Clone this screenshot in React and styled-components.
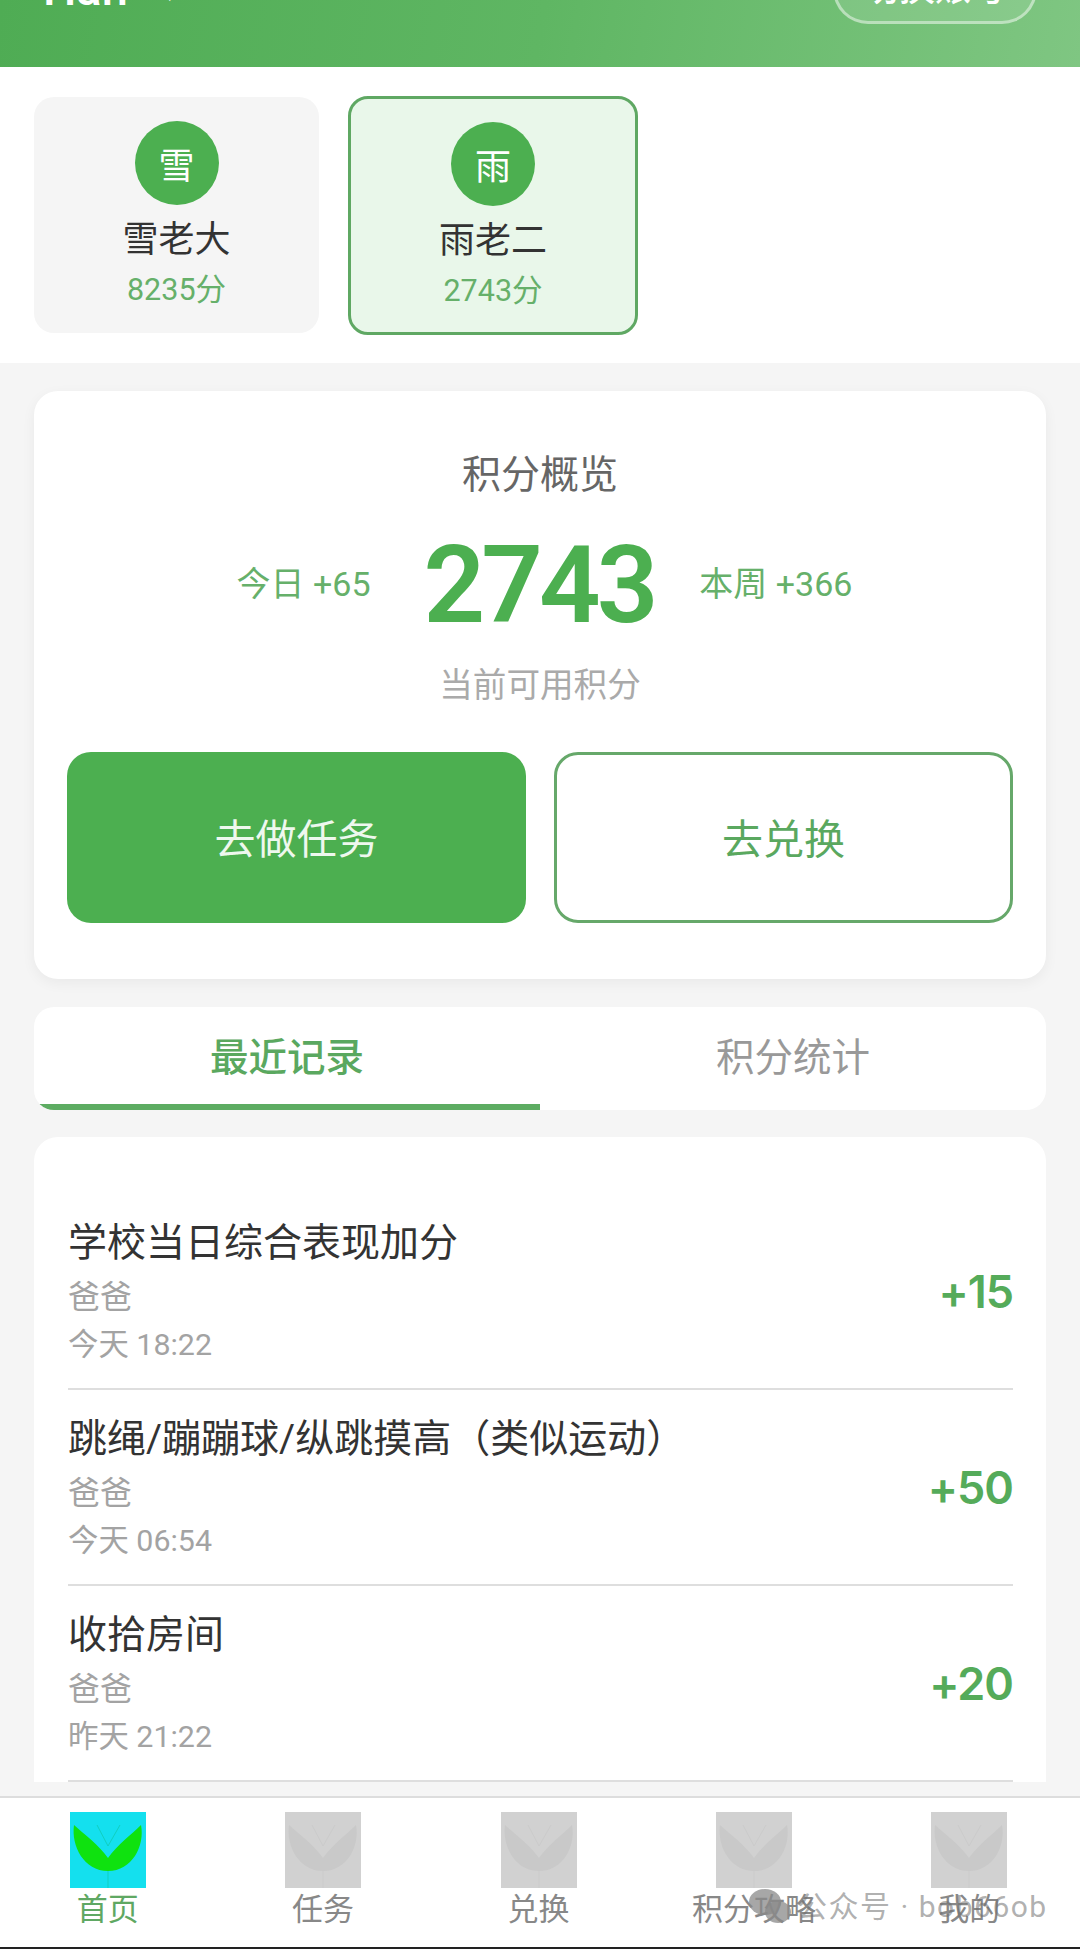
import React from "react";
import styled, { createGlobalStyle } from "styled-components";

const GREEN = "#4caf50";

const GlobalStyle = createGlobalStyle`
  html, body {
    margin: 0;
    background: #f5f5f5;
  }
  * {
    box-sizing: border-box;
  }
`;

const Page = styled.div`
  position: relative;
  width: 1080px;
  height: 1949px;
  display: flex;
  flex-direction: column;
  overflow: hidden;
  background: #f5f5f5;
  font-family: Roboto, "Noto Sans CJK SC", sans-serif;
  color: #333;
`;

const Header = styled.header`
  flex: 0 0 67px;
  height: 67px;
  padding: 0 43px 43px;
  display: flex;
  align-items: flex-end;
  justify-content: space-between;
  overflow: hidden;
  background: linear-gradient(100deg, #4fac54 0%, #5fb663 50%, #7fc682 100%);
  color: #fff;
`;

const FamilyName = styled.div`
  display: flex;
  align-items: flex-end;
  gap: 30px;
  font-size: 47px;
  font-weight: 500;
  line-height: 1;
  margin-bottom: 12px;
  span {
    font-size: 24px;
    margin-bottom: 9px;
  }
`;

const SwitchButton = styled.div`
  flex: none;
  width: 204px;
  height: 70px;
  display: flex;
  align-items: flex-end;
  justify-content: center;
  padding-bottom: 14px;
  border: 3px solid rgba(255, 255, 255, 0.45);
  border-radius: 36px;
  background: rgba(255, 255, 255, 0.1);
  font-size: 36px;
  font-weight: 500;
  line-height: 1;
`;

const Selector = styled.section`
  flex: 0 0 296px;
  display: flex;
  align-items: center;
  gap: 29px;
  padding: 0 34px;
  background: #fff;
`;

const ChildCard = styled.div`
  width: ${(p) => (p.$active ? 290 : 285)}px;
  height: ${(p) => (p.$active ? 239 : 236)}px;
  padding-top: ${(p) => (p.$active ? 23 : 24)}px;
  display: flex;
  flex-direction: column;
  align-items: center;
  border-radius: 20px;
  background: ${(p) => (p.$active ? "#e9f7ea" : "#f5f5f5")};
  border: ${(p) => (p.$active ? `3px solid #5fa863` : "none")};
`;

const Avatar = styled.div`
  width: 84px;
  height: 84px;
  border-radius: 50%;
  display: flex;
  align-items: center;
  justify-content: center;
  background: ${GREEN};
  color: #fff;
  font-size: 36px;
`;

const ChildName = styled.div`
  margin-top: 10px;
  font-size: 36px;
  line-height: 50px;
  color: #333;
`;

const ChildScore = styled.div`
  margin-top: 5px;
  font-size: 30.5px;
  line-height: 40px;
  color: #66b06a;
`;

const Main = styled.main`
  flex: 1;
  min-height: 0;
  overflow: hidden;
  padding: 28px 34px 0;
  display: flex;
  flex-direction: column;
`;

const OverviewCard = styled.section`
  flex: none;
  height: 588px;
  padding: 59px 33px 0;
  border-radius: 24px;
  background: #fff;
  box-shadow: 0 4px 14px rgba(0, 0, 0, 0.05);
`;

const OverviewTitle = styled.div`
  font-size: 39px;
  line-height: 50px;
  text-align: center;
  color: #666;
`;

const StatsRow = styled.div`
  margin-top: 18px;
  height: 130px;
  padding-left: 9px;
  display: flex;
  align-items: center;
  justify-content: center;
  gap: 45px;
`;

const StatSide = styled.div`
  margin-bottom: 4px;
  font-size: 34px;
  color: #66b06a;
  white-space: nowrap;
`;

const BigScore = styled.div`
  margin: 4px 0 0 8px;
  font-size: 108px;
  font-weight: 600;
  line-height: 130px;
  letter-spacing: -4px;
  color: ${GREEN};
`;

const OverviewHint = styled.div`
  margin-top: 16px;
  font-size: 33.6px;
  line-height: 44px;
  text-align: center;
  color: #aaa;
`;

const ButtonRow = styled.div`
  margin-top: 44px;
  display: grid;
  grid-template-columns: 1fr 1fr;
  gap: 28px;
`;

const ActionButton = styled.div`
  height: 171px;
  padding-bottom: 4px;
  display: flex;
  align-items: center;
  justify-content: center;
  border-radius: 24px;
  font-size: 41px;
  background: ${(p) => (p.$primary ? GREEN : "#fff")};
  color: ${(p) => (p.$primary ? "#eef8ee" : "#5aa85f")};
  border: ${(p) => (p.$primary ? "none" : "3px solid #66a86a")};
`;

const Tabs = styled.div`
  flex: none;
  margin-top: 28px;
  height: 103px;
  display: grid;
  grid-template-columns: 1fr 1fr;
  overflow: hidden;
  border-radius: 20px;
  background: #fff;
`;

const Tab = styled.div`
  display: flex;
  align-items: center;
  justify-content: center;
  padding-bottom: ${(p) => (p.$active ? 4 : 10)}px;
  font-size: 38.5px;
  font-weight: ${(p) => (p.$active ? 500 : 400)};
  color: ${(p) => (p.$active ? "#5aa85f" : "#999")};
  border-bottom: ${(p) => (p.$active ? "6px solid #5dac62" : "none")};
`;

const RecordList = styled.section`
  flex: none;
  margin-top: 27px;
  padding: 57px 33px 0 34px;
  border-radius: 24px 24px 0 0;
  background: #fff;
`;

const RecordRow = styled.div`
  display: flex;
  align-items: center;
  justify-content: space-between;
  padding: 24px 0 23px;
  border-bottom: 2px solid #dedede;
`;

const RecordInfo = styled.div`
  display: flex;
  flex-direction: column;
`;

const RecordTitle = styled.div`
  font-size: 39px;
  line-height: 50px;
  color: #333;
`;

const RecordParent = styled.div`
  margin-top: 7px;
  font-size: 32px;
  line-height: 44px;
  color: #a3a3a3;
`;

const RecordTime = styled.div`
  margin-top: 6px;
  font-size: 30.4px;
  line-height: 40px;
  color: #a3a3a3;
`;

const RecordPoints = styled.div`
  font-family: Inter, Roboto, sans-serif;
  font-size: 45px;
  font-weight: 600;
  letter-spacing: -1px;
  color: #55ab5a;
`;

const TabBar = styled.nav`
  flex: 0 0 153px;
  display: flex;
  padding-right: 3px;
  border-top: 2px solid #dddddd;
  border-bottom: 2px solid #222;
  background: #fff;
`;

const TabBarItem = styled.div`
  flex: 1;
  padding-top: 14px;
  display: flex;
  flex-direction: column;
  align-items: center;
  font-size: 31px;
  line-height: 44px;
  white-space: nowrap;
  color: ${(p) => (p.$active ? "#5fa863" : "#888")};
`;

const Watermark = styled.div`
  position: absolute;
  left: 748px;
  top: 1888px;
  display: flex;
  align-items: center;
  font-size: 30px;
  line-height: 38px;
  letter-spacing: 1.5px;
  color: rgba(110, 110, 110, 0.55);
  white-space: nowrap;
`;

const BubbleIcon = styled.svg`
  margin-right: 5px;
`;

const SproutIcon = ({ active }) => {
  const bg = active ? "#14e0ee" : "#d1d1d1";
  const leaf = active ? "#0fe20f" : "#c9c9c9";
  const vein = active ? "#10cfc0" : "#cbcbcb";
  return (
    <svg width="76" height="76" viewBox="0 0 76 76">
      <rect width="76" height="76" fill={bg} />
      <path d="M38 58V76M38 34L27 13M38 34L50 13" stroke={vein} strokeWidth="1" fill="none" />
      <path
        d="M4 13C14 22 29 33 38 46C47 33 62 22 71 13C75 34 62 59 38 59C14 59 1 34 4 13Z"
        fill={leaf}
      />
    </svg>
  );
};

const WechatMark = () => (
  <BubbleIcon width="44" height="36" viewBox="0 0 44 36">
    <ellipse cx="17" cy="13" rx="16" ry="13" fill="#8a8a8a" opacity="0.75" />
    <ellipse cx="30" cy="23" rx="13" ry="11" fill="#8a8a8a" opacity="0.75" />
  </BubbleIcon>
);

const children = [
  { mark: "雪", name: "雪老大", score: "8235分" },
  { mark: "雨", name: "雨老二", score: "2743分", active: true },
];

const records = [
  { title: "学校当日综合表现加分", parent: "爸爸", time: "今天 18:22", points: "+15" },
  { title: "跳绳/蹦蹦球/纵跳摸高（类似运动）", parent: "爸爸", time: "今天 06:54", points: "+50" },
  { title: "收拾房间", parent: "爸爸", time: "昨天 21:22", points: "+20" },
];

const navItems = ["首页", "任务", "兑换", "积分攻略", "我的"];

const App = () => (
  <Page>
    <GlobalStyle />
    <Header>
      <FamilyName>
        Han <span>↓</span>
      </FamilyName>
      <SwitchButton>切换账号</SwitchButton>
    </Header>

    <Selector>
      {children.map((c) => (
        <ChildCard key={c.name} $active={c.active}>
          <Avatar>{c.mark}</Avatar>
          <ChildName>{c.name}</ChildName>
          <ChildScore>{c.score}</ChildScore>
        </ChildCard>
      ))}
    </Selector>

    <Main>
      <OverviewCard>
        <OverviewTitle>积分概览</OverviewTitle>
        <StatsRow>
          <StatSide>今日 +65</StatSide>
          <BigScore>2743</BigScore>
          <StatSide>本周 +366</StatSide>
        </StatsRow>
        <OverviewHint>当前可用积分</OverviewHint>
        <ButtonRow>
          <ActionButton $primary>去做任务</ActionButton>
          <ActionButton>去兑换</ActionButton>
        </ButtonRow>
      </OverviewCard>

      <Tabs>
        <Tab $active>最近记录</Tab>
        <Tab>积分统计</Tab>
      </Tabs>

      <RecordList>
        {records.map((r) => (
          <RecordRow key={r.title}>
            <RecordInfo>
              <RecordTitle>{r.title}</RecordTitle>
              <RecordParent>{r.parent}</RecordParent>
              <RecordTime>{r.time}</RecordTime>
            </RecordInfo>
            <RecordPoints>{r.points}</RecordPoints>
          </RecordRow>
        ))}
      </RecordList>
    </Main>

    <TabBar>
      {navItems.map((label, i) => (
        <TabBarItem key={label} $active={i === 0}>
          <SproutIcon active={i === 0} />
          {label}
        </TabBarItem>
      ))}
    </TabBar>

    <Watermark>
      <WechatMark />
      公众号 · bob66ob
    </Watermark>
  </Page>
);

export default App;
